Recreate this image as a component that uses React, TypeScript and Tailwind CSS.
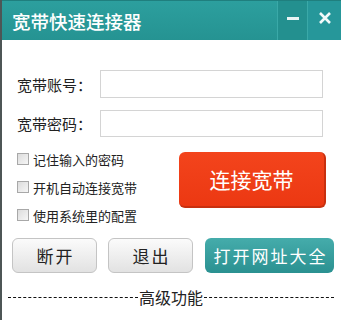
import React from 'react';

const font = { fontFamily: '"Noto Sans CJK SC", "Noto Sans", sans-serif' };

function CheckRow({ label }: { label: string }) {
  return (
    <div className="flex h-[28px] items-center">
      <span className="h-[12px] w-[12px] border border-[#a8a8a8] bg-gradient-to-br from-[#dcdcdc] to-[#f6f6f6]" />
      <span className="ml-[4px] text-[13px] leading-none text-[#222]">{label}</span>
    </div>
  );
}

function App() {
  return (
    <div className="h-[320px] w-[341px] overflow-hidden bg-white" style={font}>
      <div className="flex h-full flex-col border-l-2 border-[#4d5656]">
        {/* title bar */}
        <div className="flex h-[40px] items-stretch border-t border-[#1f7f7e] bg-gradient-to-b from-[#2c9f9e] to-[#259392]">
          <div className="flex flex-1 items-center pl-[10px] pt-[2px] text-[18.5px] font-medium leading-none text-white">
            宽带快速连接器
          </div>
          <div className="flex w-[30px] items-center justify-center border-l border-[#3aa9a8] bg-[#23908f]">
            <span className="mt-[-4px] h-[3px] w-[12px] bg-[#e8f4f4]" />
          </div>
          <div className="flex w-[34px] items-center justify-center border-l border-[#3aa9a8] bg-[#26979a]">
            <svg width="14" height="12" viewBox="0 0 14 12" className="mt-[-6px]">
              <path d="M2 1 L12 11 M12 1 L2 11" stroke="#f2fafa" strokeWidth="2.6" />
            </svg>
          </div>
        </div>

        {/* account / password */}
        <div className="flex flex-col gap-[12px] pl-[15px] pt-[30px]">
          <div className="flex items-center">
            <span className="w-[83px] text-[15px] leading-none text-[#222]">宽带账号：</span>
            <div className="h-[28px] w-[223px] border border-[#d4d4d4] bg-white" />
          </div>
          <div className="flex items-center">
            <span className="w-[83px] text-[15px] leading-none text-[#222]">宽带密码：</span>
            <div className="h-[27px] w-[223px] border border-[#d4d4d4] bg-white" />
          </div>
        </div>

        {/* options + connect */}
        <div className="mt-[8px] flex pl-[15px] pr-[15px]">
          <div className="flex flex-col">
            <CheckRow label="记住输入的密码" />
            <CheckRow label="开机自动连接宽带" />
            <CheckRow label="使用系统里的配置" />
          </div>
          <button className="ml-auto mt-[7px] flex h-[56px] w-[147px] items-center justify-center rounded-[6px] border-b-2 border-r-2 border-[#c8300f] bg-gradient-to-b from-[#f3441c] to-[#ec3812] text-[21px] leading-none text-white">
            连接宽带
          </button>
        </div>

        {/* bottom buttons */}
        <div className="mt-[9px] flex pl-[10px]">
          <button className="flex h-[35px] w-[85px] items-center justify-center rounded-[6px] border border-[#c4c4c4] bg-gradient-to-b from-[#fbfbfb] to-[#e2e2e2] pl-[2px] text-[17px] leading-none tracking-[2px] text-[#222]">
            断开
          </button>
          <button className="ml-[11px] flex h-[35px] w-[85px] items-center justify-center rounded-[6px] border border-[#c4c4c4] bg-gradient-to-b from-[#fbfbfb] to-[#e2e2e2] pl-[2px] text-[17px] leading-none tracking-[2px] text-[#222]">
            退出
          </button>
          <button className="ml-[12px] flex h-[35px] w-[129px] items-center justify-center rounded-[6px] bg-gradient-to-b from-[#45acab] to-[#2a9191] pl-[2px] text-[17px] leading-none tracking-[2px] text-white">
            打开网址大全
          </button>
        </div>

        {/* advanced divider */}
        <div className="mt-[16px] flex items-center pl-[6px] pr-[7px]">
          <div className="flex-1 border-t border-dashed border-[#111]" />
          <span className="px-[1px] text-[16px] leading-none text-[#222]">高级功能</span>
          <div className="flex-1 border-t border-dashed border-[#111]" />
        </div>
      </div>
    </div>
  );
}

export default App;
